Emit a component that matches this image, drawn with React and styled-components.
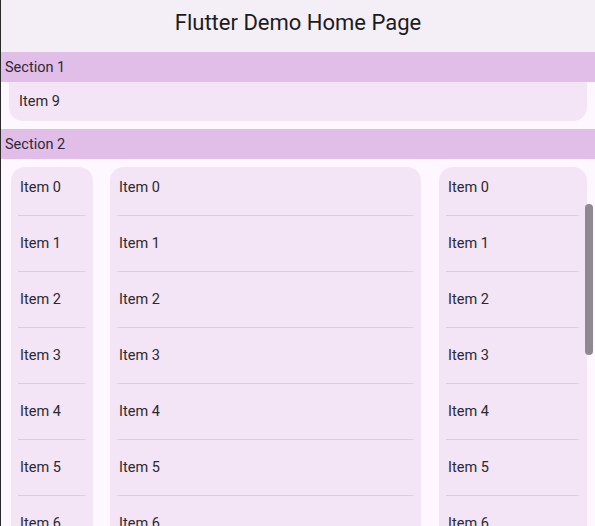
import React from 'react';
import styled, { createGlobalStyle } from 'styled-components';

const GlobalStyle = createGlobalStyle`
  html, body {
    margin: 0;
    padding: 0;
    height: 526px;
    overflow: hidden;
    background: #fef7ff;
    font-family: Roboto, "Noto Sans", sans-serif;
  }
`;

const columns = [
  { width: 82 },
  { width: 311 },
  { width: 148 },
];

const items = [0, 1, 2, 3, 4, 5, 6, 7];

const App = () => {
  return (
    <Page>
      <GlobalStyle />
      <AppBar>Flutter Demo Home Page</AppBar>

      <SectionHeader>Section 1</SectionHeader>
      <SingleCard>Item 9</SingleCard>

      <SectionHeader $spaced>Section 2</SectionHeader>
      <Grid>
        {columns.map((col, i) => (
          <Column key={i} style={{ width: col.width }}>
            <List>
              {items.map((n) => (
                <Row key={n} $first={n === 0}>
                  Item {n}
                </Row>
              ))}
            </List>
          </Column>
        ))}
      </Grid>
      <Scrollbar />
    </Page>
  );
};

const Page = styled.div`
  position: relative;
  height: 526px;
  overflow: hidden;
  border-left: 1px solid #2a2a2a;
  box-sizing: border-box;
  background: #fef7ff;
`;

const AppBar = styled.header`
  height: 52px;
  display: flex;
  align-items: center;
  justify-content: center;
  padding-bottom: 7px;
  box-sizing: border-box;
  background: #f4eff6;
  color: #1d1b20;
  font-size: 22px;
  font-weight: 400;
`;

const SectionHeader = styled.div`
  height: 30px;
  display: flex;
  align-items: center;
  padding-left: 4px;
  margin-top: ${(p) => (p.$spaced ? '8px' : '0')};
  background: #e1bee7;
  color: #2f2833;
  font-size: 14.5px;
`;

const SingleCard = styled.div`
  height: 39px;
  margin: 0 8px;
  padding-left: 10px;
  display: flex;
  align-items: center;
  background: #f3e5f5;
  border-radius: 0 0 14px 14px;
  color: #2c2930;
  font-size: 14.5px;
`;

const Grid = styled.div`
  display: flex;
  gap: 17px;
  padding: 8px 0 0 10px;
  & > :last-child {
    margin-left: 1px;
  }
`;

const Column = styled.div`
  height: 400px;
  overflow: hidden;
  background: #f3e5f5;
  border-radius: 14px 14px 0 0;
`;

const List = styled.div`
  margin-top: -8px;
`;

const Row = styled.div`
  height: 55px;
  display: flex;
  align-items: center;
  margin: 0 8px 0 7px;
  padding-left: 2px;
  color: #2c2930;
  font-size: 14.5px;
  border-top: 1px solid ${(p) => (p.$first ? 'transparent' : '#dccddf')};
`;

const Scrollbar = styled.div`
  position: absolute;
  left: 584px;
  top: 204px;
  width: 8px;
  height: 151px;
  border-radius: 4px;
  background: #8e8990;
`;

export default App;
